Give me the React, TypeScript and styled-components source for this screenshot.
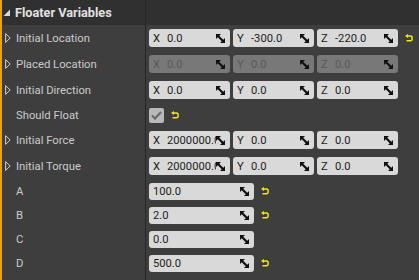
import { FunctionComponent, ReactNode } from "react";
import styled, { createGlobalStyle } from "styled-components";

const GlobalStyle = createGlobalStyle`
  html, body {
    margin: 0;
    padding: 0;
    background: #3e3e3e;
  }
  body {
    font-family: Roboto, "Liberation Sans", sans-serif;
  }
`;

const Panel = styled.div`
  width: 417px;
  height: 280px;
  border-left: 2px solid #f0a400;
  background: #3e3e3e;
  overflow: hidden;
  display: flex;
  flex-direction: column;
`;

const Header = styled.div`
  height: 25px;
  flex: none;
  display: grid;
  grid-template-columns: 143px 1fr;
  background: #303030;
`;

const HeaderTitle = styled.div`
  display: flex;
  align-items: center;
  gap: 4px;
  padding-left: 1px;
  font-size: 12.7px;
  font-weight: 700;
  color: #e2e2e2;
`;

const Row = styled.div<{ $height: number }>`
  height: ${(p) => p.$height}px;
  flex: none;
  display: grid;
  grid-template-columns: 143px 1fr;
`;

const Filler = styled.div`
  flex: 1;
  display: grid;
  grid-template-columns: 143px 1fr;
`;

const NameCell = styled.div`
  display: flex;
  align-items: center;
  padding-left: 3px;
  font-size: 11.3px;
  color: #cbcbcb;
`;

const ExpanderSlot = styled.div`
  width: 11px;
  flex: none;
  display: flex;
  align-items: center;
`;

const ValueCell = styled.div`
  border-left: 1px solid #262626;
  display: flex;
  align-items: center;
  gap: 3px;
  padding-left: 3px;
`;

const Field = styled.div<{ $width: number; $height: number; $disabled?: boolean }>`
  width: ${(p) => p.$width}px;
  height: ${(p) => p.$height}px;
  flex: none;
  box-sizing: border-box;
  border-radius: 3px;
  background: ${(p) => (p.$disabled ? "#787878" : "#d9d9d9")};
  color: ${(p) => (p.$disabled ? "#585858" : "#1c1c1c")};
  display: flex;
  align-items: center;
  padding: 0 5px 0 4px;
  font-size: 11.2px;
  overflow: hidden;
`;

const Axis = styled.span`
  width: 14px;
  flex: none;
`;

const Value = styled.span`
  flex: 1;
  min-width: 0;
  white-space: nowrap;
  overflow: hidden;
`;

const Spin = styled.svg`
  width: 9px;
  height: 9px;
  flex: none;
`;

const Check = styled.div`
  width: 15px;
  height: 15px;
  border-radius: 2px;
  background: #b9b9b9;
  display: flex;
  align-items: center;
  justify-content: center;
`;

const Reset = styled.svg`
  width: 8px;
  height: 8px;
  flex: none;
  margin-left: 4px;
`;

const ExpandArrow = () => (
  <svg width="6" height="10" viewBox="0 0 6 10">
    <polygon points="0.6,0.6 5.2,5 0.6,9.4" fill="none" stroke="#cfcfcf" strokeWidth="1" />
  </svg>
);

const SpinIcon = () => (
  <Spin viewBox="0 0 9 9">
    <polygon points="0,0 5,0 0,5" fill="#111" />
    <polygon points="9,9 4,9 9,4" fill="#111" />
    <line x1="1" y1="1" x2="8" y2="8" stroke="#111" strokeWidth="2.2" />
  </Spin>
);

const ResetIcon = () => (
  <Reset viewBox="0 0 8 8">
    <polygon points="0,2 3,0 3,4" fill="#eeee00" />
    <path d="M2.5 2 H5.5 Q7.2 2 7.2 4.3 Q7.2 6.8 5.5 6.8 H1.5" fill="none" stroke="#eeee00" strokeWidth="1.4" />
  </Reset>
);

type VectorFieldProps = { axis: string; value: string; disabled?: boolean };

const VectorField: FunctionComponent<VectorFieldProps> = ({ axis, value, disabled }) => (
  <Field $width={81} $height={18} $disabled={disabled}>
    <Axis>{axis}</Axis>
    <Value>{value}</Value>
    <SpinIcon />
  </Field>
);

type PropRowProps = {
  label: string;
  height: number;
  expandable?: boolean;
  children?: ReactNode;
};

const PropRow: FunctionComponent<PropRowProps> = ({ label, height, expandable, children }) => (
  <Row $height={height}>
    <NameCell>
      <ExpanderSlot>{expandable && <ExpandArrow />}</ExpanderSlot>
      {label}
    </NameCell>
    <ValueCell>{children}</ValueCell>
  </Row>
);

const VectorRow: FunctionComponent<{
  label: string;
  height: number;
  values: [string, string, string];
  disabled?: boolean;
  reset?: boolean;
}> = ({ label, height, values, disabled, reset }) => (
  <PropRow label={label} height={height} expandable>
    <VectorField axis="X" value={values[0]} disabled={disabled} />
    <VectorField axis="Y" value={values[1]} disabled={disabled} />
    <VectorField axis="Z" value={values[2]} disabled={disabled} />
    {reset && <ResetIcon />}
  </PropRow>
);

const ScalarRow: FunctionComponent<{ label: string; value: string; height: number; reset?: boolean }> = ({
  label,
  value,
  height,
  reset,
}) => (
  <PropRow label={label} height={height}>
    <Field $width={105} $height={17}>
      <Value>{value}</Value>
      <SpinIcon />
    </Field>
    {reset && <ResetIcon />}
  </PropRow>
);

export default function App() {
  return (
    <>
      <GlobalStyle />
      <Panel>
        <Header>
          <HeaderTitle>
            <svg width="8" height="8" viewBox="0 0 8 8">
              <polygon points="7,0.5 7,7 0.5,7" fill="#d8d8d8" />
            </svg>
            Floater Variables
          </HeaderTitle>
          <ValueCell />
        </Header>
        <VectorRow label="Initial Location" height={26} values={["0.0", "-300.0", "-220.0"]} reset />
        <VectorRow label="Placed Location" height={26} values={["0.0", "0.0", "0.0"]} disabled />
        <VectorRow label="Initial Direction" height={26} values={["0.0", "0.0", "0.0"]} />
        <PropRow label="Should Float" height={24}>
          <Check>
            <svg width="11" height="9" viewBox="0 0 11 9">
              <polyline points="1,4.5 4,7.5 10,1" fill="none" stroke="#6a6a6a" strokeWidth="2.2" />
            </svg>
          </Check>
          <ResetIcon />
        </PropRow>
        <VectorRow label="Initial Force" height={26} values={["2000000.0", "0.0", "0.0"]} />
        <VectorRow label="Initial Torque" height={26} values={["2000000.0", "0.0", "0.0"]} />
        <ScalarRow label="A" value="100.0" height={24} reset />
        <ScalarRow label="B" value="2.0" height={24} reset />
        <ScalarRow label="C" value="0.0" height={24} />
        <ScalarRow label="D" value="500.0" height={24} reset />
        <Filler>
          <div />
          <ValueCell />
        </Filler>
      </Panel>
    </>
  );
}
